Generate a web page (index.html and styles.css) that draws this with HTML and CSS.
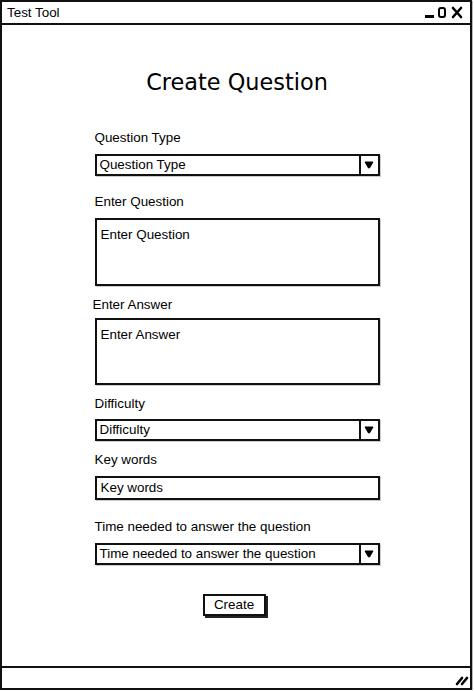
FILE: index.html
```html
<!DOCTYPE html>
<html>
<head>
<meta charset="utf-8">
<link rel="stylesheet" href="styles.css">
</head>
<body>
<div class="window">
  <div class="titlebar">
    <span class="title">Test Tool</span>
    <svg class="controls" width="42" height="14" viewBox="0 0 42 14">
      <rect x="1" y="9" width="9" height="3" fill="#000"/>
      <rect x="15" y="2" width="6" height="9" rx="2" fill="none" stroke="#000" stroke-width="2"/>
      <path d="M29 2 L37 11 M37 2 L29 11" stroke="#000" stroke-width="2.6" stroke-linecap="round"/>
    </svg>
  </div>
  <div class="content">
    <h1 class="heading">Create Question</h1>
    <form class="form">
      <label class="label lbl-type">Question Type</label>
      <div class="select"><span class="select-text">Question Type</span><span class="arrow"><svg width="10" height="8" viewBox="0 0 10 8"><path d="M1 1 L9 1 L5.5 7 L4.5 7 Z" fill="#000" stroke="#000" stroke-width="1" stroke-linejoin="round"/></svg></span></div>

      <label class="label lbl-q">Enter Question</label>
      <div class="textarea ta-q">Enter Question</div>

      <label class="label lbl-a">Enter Answer</label>
      <div class="textarea ta-a">Enter Answer</div>

      <label class="label lbl-d">Difficulty</label>
      <div class="select sel-d"><span class="select-text">Difficulty</span><span class="arrow"><svg width="10" height="8" viewBox="0 0 10 8"><path d="M1 1 L9 1 L5.5 7 L4.5 7 Z" fill="#000" stroke="#000" stroke-width="1" stroke-linejoin="round"/></svg></span></div>

      <label class="label lbl-k">Key words</label>
      <div class="input">Key words</div>

      <label class="label lbl-t">Time needed to answer the question</label>
      <div class="select sel-t"><span class="select-text">Time needed to answer the question</span><span class="arrow"><svg width="10" height="8" viewBox="0 0 10 8"><path d="M1 1 L9 1 L5.5 7 L4.5 7 Z" fill="#000" stroke="#000" stroke-width="1" stroke-linejoin="round"/></svg></span></div>

      <div class="btn-row"><span class="button">Create</span></div>
    </form>
  </div>
  <div class="statusbar">
    <svg class="grip" width="14" height="12" viewBox="0 0 14 12">
      <path d="M2 10 L7 4 M7 10 L12 4" stroke="#000" stroke-width="2.6" stroke-linecap="round"/>
    </svg>
  </div>
</div>
</body>
</html>
```

FILE: styles.css
```css
html, body {
  margin: 0;
  padding: 0;
  background: #fff;
}
body {
  font-family: "Liberation Sans", Arial, sans-serif;
  color: #000;
}
.window {
  box-sizing: border-box;
  width: 472px;
  height: 690px;
  border: 2px solid #111;
  display: flex;
  flex-direction: column;
  box-shadow: 1px 1px 0 #bbb;
}
.titlebar {
  height: 21px;
  border-bottom: 2px solid #111;
  display: flex;
  align-items: center;
  justify-content: space-between;
  padding: 0 4px 0 5px;
  flex-shrink: 0;
}
.title {
  font-size: 13.4px;
  line-height: 16px;
}
.controls {
  margin-top: 1px;
}
.content {
  flex: 1;
  display: flex;
  flex-direction: column;
  align-items: center;
}
.heading {
  margin: 42px 0 0 0;
  font-family: "DejaVu Sans", sans-serif;
  font-weight: normal;
  font-size: 22.4px;
  line-height: 30px;
  padding-left: 2px;
}
.form {
  width: 285px;
  margin: 0;
  margin-left: 2px;
  display: flex;
  flex-direction: column;
}
.label {
  font-size: 13.4px;
  line-height: 16px;
  display: block;
}
.lbl-type { margin-top: 33px; }
.lbl-q { margin-top: 18px; }
.lbl-a { margin-top: 11px; margin-left: -2px; }
.lbl-d { margin-top: 11px; }
.lbl-k { margin-top: 11px; }
.lbl-t { margin-top: 19px; }

.select, .textarea, .input {
  box-sizing: border-box;
  border: 2px solid #111;
  font-size: 13.4px;
  line-height: 16px;
  box-shadow: 1px 1px 0 #ccc;
}
.select {
  margin-top: 8px;
  height: 22px;
  display: flex;
  align-items: center;
}
.sel-d { margin-top: 7px; }
.select-text {
  flex: 1;
  padding-left: 3px;
}
.arrow {
  width: 17px;
  height: 100%;
  border-left: 2px solid #111;
  display: flex;
  align-items: center;
  justify-content: center;
}
.textarea {
  padding: 7px 4px;
}
.ta-q { margin-top: 8px; height: 68px; }
.ta-a { margin-top: 5px; height: 67px; }
.input {
  margin-top: 8px;
  height: 24px;
  padding: 2px 4px;
}
.btn-row {
  margin-top: 29px;
  display: flex;
  justify-content: center;
  padding-right: 6px;
}
.button {
  box-sizing: border-box;
  width: 63px;
  height: 22px;
  border: 2px solid #111;
  box-shadow: 2px 2px 0 #222;
  font-size: 13.4px;
  line-height: 18px;
  text-align: center;
}
.statusbar {
  height: 18px;
  border-top: 2px solid #111;
  flex-shrink: 0;
  display: flex;
  align-items: flex-end;
  justify-content: flex-end;
  padding: 0 1px 2px 0;
}
```
